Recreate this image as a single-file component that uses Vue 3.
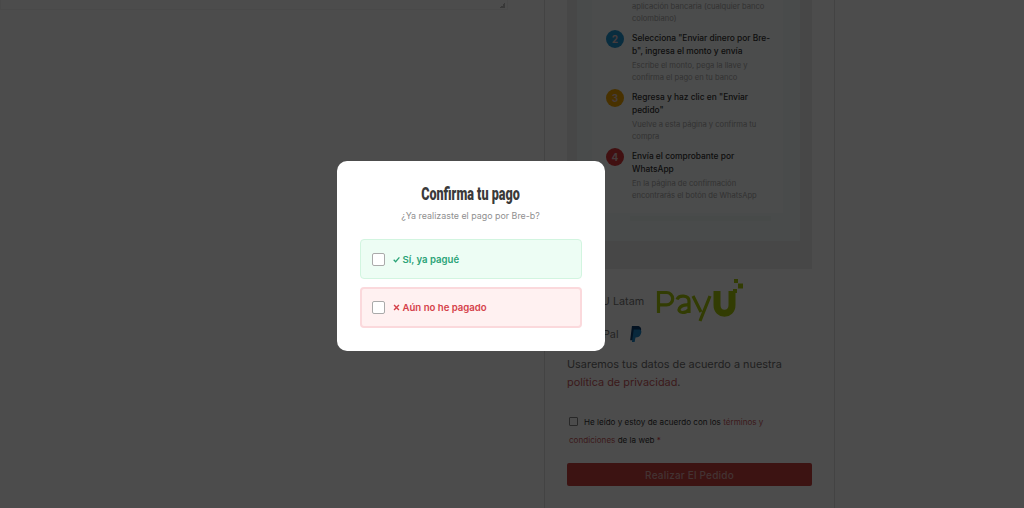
<template>
  <div class="page">
    <main class="left">
      <div class="textarea"><span class="grip"></span></div>
    </main>
    <aside class="right">
      <section class="panel">
        <div class="card">
          <div class="inner">
            <ol class="steps">
              <li v-for="s in steps" :key="s.n" class="step">
                <span v-if="s.n > 1" class="num" :class="'n' + s.n">{{ s.n }}</span>
                <span v-else class="num-empty"></span>
                <div class="step-text">
                  <strong v-if="s.title">{{ s.title }}</strong>
                  <small>{{ s.desc }}</small>
                </div>
              </li>
            </ol>
          </div>
          <div class="strip"></div>
        </div>
      </section>

      <div class="pay-row payu">
        <span class="pay-label">PayU Latam</span>
        <svg class="payu-logo" viewBox="0 0 90 44" width="90" height="44">
          <g fill="none" stroke="#a9c80c" stroke-width="3.2">
            <path d="M2.500 34V13.500h8a6.200 6.200 0 0 1 0 12.400h-8" />
            <path d="M33 34V22c0-6-10-6.500-12-1.500M33 26c-10-1-13 7-6.500 7.500 3 0 5-1 6.500-3" />
            <path d="M37 17l8 16M54 17L44 42" />
          </g>
          <path d="M61 12v14c0 11 15 11 15 0V12" fill="none" stroke="#a9c80c" stroke-width="7" />
          <g fill="#a9c80c">
            <rect x="82" y="4.500" width="5" height="5" />
            <rect x="78" y="0" width="4" height="4" />
            <rect x="77" y="10" width="4" height="4" />
            <rect x="74" y="13" width="3" height="3" />
          </g>
        </svg>
      </div>
      <div class="pay-row paypal">
        <span class="pay-label">PayPal</span>
        <svg viewBox="0 0 14 18" width="13" height="16" class="pp">
          <path d="M3 0h6c4 0 5 3 4 6-1 4-4 5-7 5L5 16H1z" fill="#0c3d6e" />
          <path d="M5 4h6c3 0 3 3 2 5-1 3-3 4-6 4l-1 5H3z" fill="#1b86c9" />
        </svg>
      </div>

      <p class="privacy">Usaremos tus datos de acuerdo a nuestra <a>política de privacidad</a>.</p>

      <p class="terms">
        <span class="tick"></span>He leído y estoy de acuerdo con los <a>términos y condiciones</a> de la web <b>*</b>
      </p>

      <button class="order" type="button">Realizar El Pedido</button>
    </aside>

    <div class="overlay">
      <div class="modal">
        <h2><span>Confirma tu pago</span></h2>
        <p>¿Ya realizaste el pago por Bre-b?</p>
        <label class="opt yes">
          <span class="box"></span>
          <svg viewBox="0 0 8 8" width="7" height="7"><path d="M.8 4.300 3 6.500 7.300 1.500" fill="none" stroke="currentColor" stroke-width="1.500" /></svg>
          <span>Sí, ya pagué</span>
        </label>
        <label class="opt no">
          <span class="box"></span>
          <svg viewBox="0 0 8 8" width="7" height="7"><path d="M1.200 1.200 6.800 6.800M6.800 1.200 1.200 6.800" fill="none" stroke="currentColor" stroke-width="1.600" /></svg>
          <span>Aún no he pagado</span>
        </label>
      </div>
    </div>
  </div>
</template>

<script setup>
const steps = [
  { n: 1, title: '', desc: 'aplicación bancaria (cualquier banco colombiano)' },
  { n: 2, title: 'Selecciona "Enviar dinero por Bre-b", ingresa el monto y envía', desc: 'Escribe el monto, pega la llave y confirma el pago en tu banco' },
  { n: 3, title: 'Regresa y haz clic en "Enviar pedido"', desc: 'Vuelve a esta página y confirma tu compra' },
  { n: 4, title: 'Envía el comprobante por WhatsApp', desc: 'En la página de confirmación encontrarás el botón de WhatsApp' }
]
</script>

<style>
html, body { margin: 0; height: 508px; overflow: hidden; background: #fff; }
</style>

<style scoped>
.page {
  position: relative;
  display: flex;
  width: 1024px;
  height: 508px;
  overflow: hidden;
  background: #fff;
  font-family: Inter, "Liberation Sans", sans-serif;
  color: #333;
}
.left { width: 545px; flex: none; border-right: 1px solid #e0e0e0; box-sizing: border-box; padding-right: 36px; }
.textarea { height: 9px; border: 1px solid #f4f4f4; border-top: 0; position: relative; }
.grip { position: absolute; right: 2px; bottom: 1px; width: 5px; height: 5px; background: linear-gradient(135deg, transparent 50%, #bbb 50%); }
.right {
  width: 290px;
  flex: none;
  box-sizing: border-box;
  border-right: 1px solid #e0e0e0;
  padding: 0 22px;
  display: flex;
  flex-direction: column;
}
.panel { background: #efefef; padding: 0 12px 28px 10px; }
.card { background: #f6fafa; height: 241px; padding: 0 17px 0 15px; }
.inner { background: #fafdfd; height: 213px; padding: 0 0 0 14px; overflow: hidden; }
.strip { height: 5px; margin: 3px 12px 0 38px; background: #eef7f5; }
.steps { list-style: none; margin: -1px 0 0; padding: 0; }
.step { display: flex; gap: 8px; margin-bottom: 7px; }
.num, .num-empty { width: 18px; height: 18px; flex: none; border-radius: 50%; margin-top: -2px; }
.num { color: #e8c8c8; font: 700 10px/18px Inter, sans-serif; text-align: center; }
.n2 { background: #2196d3; }
.n3 { background: #f0a500; }
.n4 { background: #d9363a; }
.step-text { display: flex; flex-direction: column; width: 142px; }
.step-text strong { font-size: 8.400px; line-height: 13px; font-weight: 500; color: #333; }
.step-text small { font-size: 7.600px; line-height: 12px; color: #aaa; margin-top: 2px; }
.pay-row { display: flex; align-items: center; font-size: 10.800px; color: #777; }
.pay-label { width: 89px; flex: none; box-sizing: border-box; padding-left: 16px; }
.payu { height: 44px; margin-top: 10px; }
.paypal { height: 16px; margin-top: 3px; }
.paypal .pay-label { width: 62px; padding-left: 17px; }
.privacy { margin: 14px 0 0; font-size: 10.900px; line-height: 17.500px; color: #6e6e6e; }
a { color: #c8585c; }
.terms { margin: 22px 0 0; padding-left: 2px; font-size: 8.100px; line-height: 18px; color: #333; }
.tick { display: inline-block; width: 7px; height: 7px; border: 1px solid #888; border-radius: 1px; margin-right: 6px; vertical-align: -1px; }
.terms b { color: #d9363a; font-weight: 400; }
.order {
  display: block;
  width: 245px;
  height: 23px;
  margin-top: 14px;
  border: 0;
  border-radius: 2px;
  background: #c8403f;
  color: #e0aaaa;
  font: 500 10px Inter, sans-serif;
  letter-spacing: .2px;
}
.overlay {
  position: absolute;
  inset: 0;
  background: rgba(0, 0, 0, .7);
  backdrop-filter: blur(.7px);
  display: flex;
  align-items: center;
  justify-content: center;
}
.modal {
  width: 268px;
  height: 190px;
  box-sizing: border-box;
  margin: 4px 83px 0 0;
  padding: 24px 23px 0;
  background: #fff;
  border-radius: 10px;
  text-align: center;
}
h2 {
  margin: 0;
  font: 900 18px/17px Roboto, sans-serif;
  color: #3a3a3a;
}
h2 span { display: inline-block; white-space: nowrap; transform: scaleX(.7); }
.modal p { margin: 8px 0 0; font-size: 8.900px; line-height: 12px; color: #8f8f8f; }
.opt {
  display: flex;
  align-items: center;
  height: 40px;
  box-sizing: border-box;
  margin-top: 8px;
  padding-left: 11px;
  border-radius: 4px;
  font-size: 9.600px;
  font-weight: 600;
  text-align: left;
}
.opt svg { margin: 0 3px 0 8px; flex: none; }
.modal p + .opt { margin-top: 17px; }
.yes { background: #edfdf4; border: 1px solid #d2f5e0; color: #2aa377; }
.no { background: #fff1f1; border: 2px solid #fbd9dc; color: #d5414a; height: 41px; padding-left: 10px; }
.box { width: 11px; height: 11px; flex: none; border: 1.500px solid #aaa; border-radius: 2px; background: #fff; }
</style>
